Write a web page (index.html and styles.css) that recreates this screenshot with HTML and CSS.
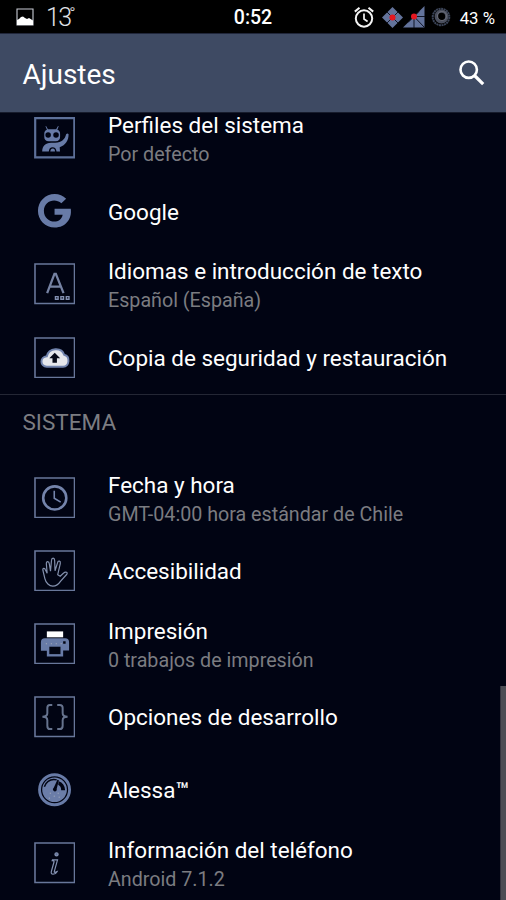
FILE: index.html
```
<!DOCTYPE html>
<html lang="es">
<head>
<meta charset="utf-8">
<title>Ajustes</title>
<link rel="stylesheet" href="styles.css">
</head>
<body>
<div class="screen">
  <header class="status">
    <div class="status-left">
      <svg class="photo" width="18" height="18" viewBox="0 0 18 18"><path d="M1 1h16v16H1z" fill="none" stroke="#c9ccd6" stroke-width="1.100"/><path d="M1 17v-5l2-1 2-2 2-.5L9 10l2 1 2-1 4 2.500V17z" fill="#fff"/></svg>
      <span class="temp">13<span class="degree">°</span></span>
    </div>
    <span class="clock">0:52</span>
    <div class="status-right">
      <svg width="20" height="21" viewBox="0 0 20 21" fill="none" stroke="#f4f4f4"><circle cx="10" cy="11.500" r="8.200" stroke-width="2"/><path d="M10 6.500v5.500l3.600 2.500" stroke-width="1.700"/><path d="M.8 4.600 5.500.8M19.200 4.600 14.500.8" stroke-width="2"/></svg>
      <svg class="wifi" width="21" height="21" viewBox="0 0 21 21"><path d="M10.500 0 21 10.500 10.500 21 0 10.500z" fill="#63739b"/><path d="m5 5 11 11M16 5 5 16" stroke="#080b18" stroke-width=".9"/><circle cx="10.500" cy="10.500" r="3" fill="#e51720"/></svg>
      <svg class="signal" width="22" height="22" viewBox="0 0 22 22"><path d="M21.500 0v21.500H0z" fill="#63739b"/><path d="M11 10.500h11M11 10.500l10.500 11M11 10.500v11.500M11 10.500 5 16.500M11 10.500l5-5" stroke="#080b18" stroke-width=".9"/><circle cx="11" cy="10.500" r="3" fill="#e51720"/></svg>
      <svg class="battery" width="20" height="20" viewBox="0 0 20 20" fill="none"><circle cx="10" cy="10" r="8.300" stroke="#3b4458" stroke-width="2" stroke-dasharray="2 .6"/><circle cx="10.500" cy="9.500" r="5.300" stroke="#4a4f5e" stroke-width="3.200"/><circle cx="11" cy="9" r="4.500" stroke="#686b76" stroke-width="1.200"/></svg>
      <span class="percent">43 %</span>
    </div>
  </header>
  <div class="toolbar">
    <h1>Ajustes</h1>
    <svg class="search" width="26" height="26" viewBox="0 0 26 26" fill="none" stroke="#fff"><circle cx="9.700" cy="9.700" r="8.200" stroke-width="2.600"/><path d="m15.500 15.500 8.700 8.700" stroke-width="3.200"/></svg>
  </div>
  <main class="viewport">
    <div class="list">
      <div class="row">
        <svg class="icon" viewBox="0 0 42 42"><path class="frame bold" d="M1.200 1.200h39.600v39.600H1.200z"/><g fill="#687ba7"><path d="m12.200 9 1.900 3.500h8.300L24.300 9l.7.400-1.400 3.600q2.800.8 2.800 4v3q0 4.500-4.500 4.500h-7q-4.500 0-4.500-4.500v-3q0-3.200 2.700-4l-1.500-3.600z"/><path d="M8.300 35c0-5.500 3-9 9-9h4c7 0 10-3.500 11.200-8.500q1.500-1.500 2.500 0c0 6.500-3 11-9 13l.3 4.500h-3.500q-.5-4.500-4-4.500T15 35z"/><path d="M16.500 35q.3-3 2.500-3t2.300 3z"/></g><circle cx="14.300" cy="18.300" r="2.800" fill="#010413"/><circle cx="22.300" cy="18.300" r="2.800" fill="#010413"/></svg>
        <div class="text"><p class="title">Perfiles del sistema</p><p class="summary">Por defecto</p></div>
      </div>
      <div class="row">
        <svg class="icon" viewBox="0 0 42 42"><path d="M32.500 8.800 27.700 13.500C21 7.500 10 11.500 10 21c0 12.500 17 15 19 4h-8.200v-6H37.200c1.500 10-5 19-16.200 19C11.500 38 4 30.500 4 21S11.500 4 21 4c4.500 0 8.500 1.800 11.500 4.800z" fill="#687ba7"/></svg>
        <div class="text"><p class="title">Google</p></div>
      </div>
      <div class="row">
        <svg class="icon" viewBox="0 0 42 42"><path class="frame" d="M1 1h40v40H1z"/><path d="M13.300 30.500 20.700 11h1.400l7.800 19.500M16 24h11" fill="none" stroke="#7582a3" stroke-width="2.300"/><path d="M21.700 34h2.700v2.700h-2.700zM27.200 34h2.700v2.700h-2.700zM32.700 34h2.700v2.700h-2.700z" fill="none" stroke="#8290b2" stroke-width="1.400"/></svg>
        <div class="text"><p class="title">Idiomas e introducción de texto</p><p class="summary">Español (España)</p></div>
      </div>
      <div class="row">
        <svg class="icon" viewBox="0 0 42 42"><path class="frame" d="M1 1h40v40H1z"/><path d="M13 30c-7 0-7.500-10 0-10.500 2-9 15-9.500 17.500-1.500 6.500 1.500 5.500 12-1 12z" fill="#e6e7eb" stroke="#7183ad" stroke-width="2"/><path d="m21 16 5.500 5.500h-3.300V26h-4.500v-4.500h-3.200z" fill="#070a17"/></svg>
        <div class="text"><p class="title">Copia de seguridad y restauración</p></div>
      </div>
      <h2 class="section">SISTEMA</h2>
      <div class="row">
        <svg class="icon" viewBox="0 0 42 42"><path class="frame" d="M1 1h40v40H1z"/><g fill="none" stroke="#7484ab"><circle cx="21" cy="21.200" r="11.700" stroke-width="2.600"/><path d="M20.500 14v7.500l6.500 4" stroke-width="1.600"/></g></svg>
        <div class="text"><p class="title">Fecha y hora</p><p class="summary">GMT-04:00 hora estándar de Chile</p></div>
      </div>
      <div class="row">
        <svg class="icon" viewBox="0 0 42 42"><path class="frame" d="M1 1h40v40H1z"/><path d="M11 29 9 20.500C8.500 18 11 18 11.500 20l1.800 3.500-.8-9.500c-.2-3 2.700-3 3 0l1.200 7.500 1-11c.2-3 3-3 3.200 0l.4 10.500 2.500-8c.8-3 3.400-2 2.800.8L24 25l2.500 1.500 3.500-3.200c2-2 4.800-.5 3 1.500L27 31.500c-2 3-4.500 5-8 5s-7-3-8-7.500z" fill="none" stroke="#8491ae" stroke-width="1.200"/></svg>
        <div class="text"><p class="title">Accesibilidad</p></div>
      </div>
      <div class="row">
        <svg class="icon" viewBox="0 0 42 42"><path class="frame" d="M1 1h40v40H1z"/><path d="M13 8.500h16.500v6H13z" fill="#fff"/><path d="M11 15.500h20.500q4 0 4 4v8.300h-6V34H13v-6H7v-8.500q0-4 4-4z" fill="#687ba7"/><path d="M15.500 24h11.300v7.500H15.500z" fill="#020513"/><path d="M29.500 18.500h2.500v2.500h-2.500z" fill="#020513"/><path d="M12 21h1m4 0h1m4 0h1m4 0h1" stroke="#aeb4bf"/></svg>
        <div class="text"><p class="title">Impresión</p><p class="summary">0 trabajos de impresión</p></div>
      </div>
      <div class="row">
        <svg class="icon" viewBox="0 0 42 42"><path class="frame" d="M1 1h40v40H1z"/><path d="M18.500 9H16q-2.500 0-2.500 3v5.500q0 3.500-5 3.500 5 0 5 3.500V30q0 3.500 2.500 3.500h2.500M23.500 9H26q3 0 3 3v5.500q0 3.500 5 3.500-5 0-5 3.500V30q0 3.500-3 3.500h-2.500" fill="none" stroke="#66738e" stroke-width="2"/></svg>
        <div class="text"><p class="title">Opciones de desarrollo</p></div>
      </div>
      <div class="row">
        <svg class="icon" viewBox="0 0 42 42"><circle cx="20.800" cy="21" r="15.200" fill="#010413" stroke="#687ba7" stroke-width="2.900"/><circle cx="20.800" cy="21" r="12.500" fill="#6b7da8"/><path d="M10.500 18C13 11.500 18 10 23 11" fill="none" stroke="#030717" stroke-width="1.500"/><path d="M25 12.500q6 2 6.500 9h-4q0-4-3-5.500z" fill="#010413"/><path d="m23.700 11 1.500.5-2.200 8.500a2 2 0 1 1-3-1z" fill="#010413"/><path d="M16 24.500h1m7 0h1m-10 5h1m4-2h1m4 1h1" stroke="#aeb4bf"/></svg>
        <div class="text"><p class="title">Alessa<span class="tm">™</span></p></div>
      </div>
      <div class="row">
        <svg class="icon" viewBox="0 0 42 42"><path class="frame" d="M1 1h40v40H1z"/><g fill="none" stroke="#8492b2" stroke-width="1.200"><circle cx="22.800" cy="12.500" r="1.600" fill="#61729a"/><path d="M18.700 18h5.100l-3.300 12q-.4 1.500 2.800 0-1.300 2.600-4 2.600-2.500 0-1.700-3l2.700-9.600q.2-1-1.900-1z"/></g></svg>
        <div class="text"><p class="title">Información del teléfono</p><p class="summary">Android 7.1.2</p></div>
      </div>
    </div>
    <div class="scrollbar"></div>
  </main>
</div>
</body>
</html>
```
FILE: styles.css
```
* { box-sizing: border-box; }
body, h1, h2, p { margin: 0; }
body { background: #010413; font-family: Roboto, sans-serif; color: #fff; }
.screen { width: 506px; height: 900px; display: flex; flex-direction: column; overflow: hidden; }
.status { height: 34px; flex: none; background: #000; display: grid; grid-template-columns: 1fr auto 1fr; align-items: center; padding: 1px 11px 0 16px; border-bottom: 1px solid #20263a; }
.status-left, .status-right { display: flex; align-items: center; }
.status-right { justify-content: flex-end; }
.temp { display: flex; margin-left: 12px; font-size: 25px; line-height: 30px; font-weight: 300; letter-spacing: -1.700px; color: #e0e2e7; padding-top: 2px; }
.degree { font-size: 17px; line-height: 20px; margin-left: -1px; }
.clock { font-size: 19.500px; font-weight: 500; margin: 0 5px 0 0; }
.wifi { margin-left: 8px; }
.battery { margin-left: 6px; }
.percent { font-size: 16.800px; margin-left: 9px; padding-top: 1px; white-space: nowrap; }
.toolbar { height: 78px; flex: none; background: #3e4a63; display: flex; align-items: center; justify-content: space-between; padding: 0 21px 0 22.500px; }
h1 { font-size: 28px; line-height: 34px; font-weight: 400; padding-top: 3px; }
.viewport { position: relative; flex: 1; overflow: hidden; border-top: 1px solid #171c2c; }
.list { margin-top: -11.500px; }
.row { height: 73.100px; display: flex; align-items: center; padding-left: 33.700px; }
.icon { width: 41.500px; height: 41.500px; flex: none; }
.frame { fill: none; stroke: #68779a; stroke-width: 1.600; }
.bold { stroke: #5d7099; stroke-width: 2.200; }
.text { margin-left: 32.800px; padding-top: 2px; }
.title { font-size: 22.470px; line-height: 29px; white-space: nowrap; }
.summary { font-size: 19.700px; line-height: 29px; margin-bottom: -2.500px; color: #7b7c81; white-space: nowrap; }
.tm { font-weight: 500; font-size: 22px; }
.section { height: 67.100px; border-top: 1.500px solid #242735; padding: 13px 0 0 22.500px; font-size: 22.500px; line-height: 28px; font-weight: 400; color: #7c7d82; }
.scrollbar { position: absolute; right: 0; top: 573px; bottom: 0; width: 6px; background: #4c4d54; border-left: 1px solid #34353f; }
```
